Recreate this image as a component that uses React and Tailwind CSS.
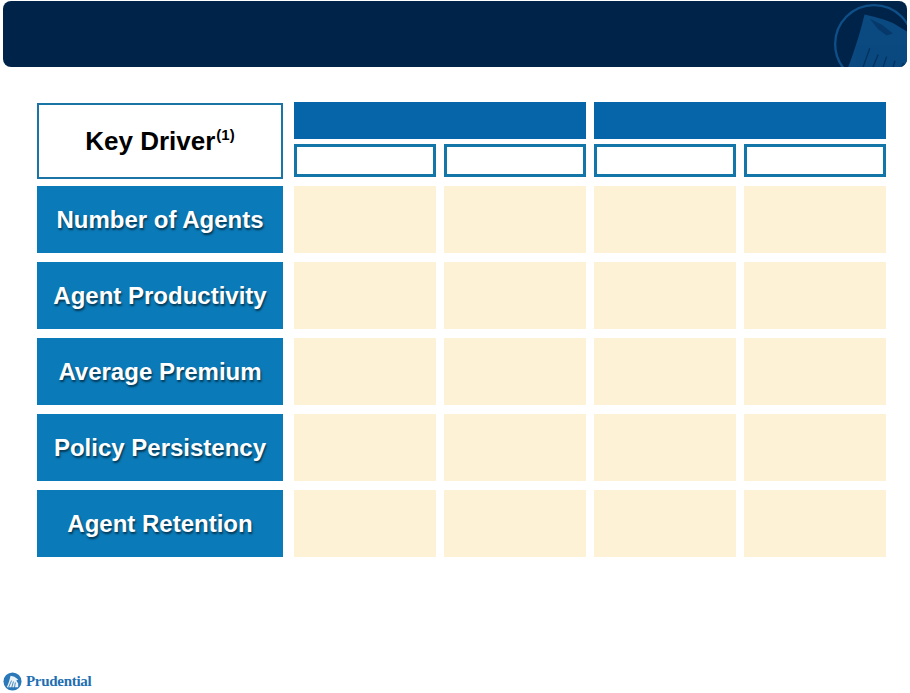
import React from 'react';

const drivers = [
  'Number of Agents',
  'Agent Productivity',
  'Average Premium',
  'Policy Persistency',
  'Agent Retention',
];

const cols = 'grid grid-cols-[249px_142px_142px_142px_142px] gap-x-2';

// Rock of Gibraltar mark in the title bar
const HeaderMark = () => (
  <svg viewBox="0 0 80 80" className="absolute left-[829px] top-[1px] w-[84px] h-[84px]">
    <circle cx="40" cy="40" r="37" fill="none" stroke="#0e4f87" strokeWidth="2.2" />
    <path
      d="M12 70 C18 56 24 40 31 12 L40 14 L50 17 L58 20 L68 26 L78 32 L80 40 L80 80 L10 80 Z"
      fill="#0a4a80"
    />
    <path d="M36 16 L48 22 L58 30 L52 32 L44 26 Z" fill="#06396a" />
    <path
      d="M26 72 L36 44 M34 74 L44 50 M44 76 L52 52 M54 76 L60 56 M62 74 L68 58 M70 70 L74 60"
      stroke="#00234a"
      strokeWidth="1.3"
      opacity="0.6"
    />
  </svg>
);

const FooterMark = () => (
  <svg viewBox="0 0 20 20" className="w-[19px] h-[19px]">
    <circle cx="10" cy="10" r="9.5" fill="#2a78b8" />
    <path d="M4 16 C6 12 7 8 8 4 L12 5 L16 8 L14 9 L16 12 L16 16 Z" fill="#fff" opacity="0.9" />
    <path d="M6 16 L9 9 M9 17 L11 10 M12 17 L13 11" stroke="#2a78b8" strokeWidth="0.9" />
  </svg>
);

const App = () => {
  return (
    <div className="w-[910px] h-[693px] bg-white relative font-['Liberation_Sans',Arial,sans-serif] overflow-hidden">
      {/* Title bar */}
      <div className="mx-[3px] mt-px h-[66px] rounded-lg bg-[#00234a] relative overflow-hidden">
        <HeaderMark />
      </div>

      {/* Table */}
      <div className="pl-[37px] pt-[35px]">
        {/* Header rows */}
        <div className={`${cols} grid-rows-[37px_33px] gap-y-[5px]`}>
          <div className="row-span-2 w-[246px] mt-px -mb-[2px] border-2 border-[#1a74a6] bg-white flex items-center justify-center">
            <span className="text-[26px] font-bold text-black">
              Key Driver<span className="text-[15px] relative -top-[10px] ml-px">(1)</span>
            </span>
          </div>
          <div className="col-span-2 bg-[#0665a9]" />
          <div className="col-span-2 bg-[#0665a9]" />
          <div className="border-[3px] border-[#1276a8] bg-white" />
          <div className="border-[3px] border-[#1276a8] bg-white" />
          <div className="border-[3px] border-[#1276a8] bg-white" />
          <div className="border-[3px] border-[#1276a8] bg-white" />
        </div>

        {/* Driver rows */}
        <div className="mt-[9px] flex flex-col gap-[9px]">
          {drivers.map((d) => (
            <div key={d} className={`${cols} h-[67px]`}>
              <div className="w-[246px] bg-[#0a7ab8] flex items-center justify-center">
                <span className="text-white font-bold text-[24px] [text-shadow:1px_2px_2px_rgba(0,0,0,0.55)]">
                  {d}
                </span>
              </div>
              <div className="bg-[#fdf1d6]" />
              <div className="bg-[#fdf1d6]" />
              <div className="bg-[#fdf1d6]" />
              <div className="bg-[#fdf1d6]" />
            </div>
          ))}
        </div>
      </div>

      {/* Footer logo */}
      <div className="absolute left-[3px] top-[670px] flex items-center gap-[4px]">
        <FooterMark />
        <span className="font-['Liberation_Serif',serif] font-bold text-[15px] text-[#1f6fb2] tracking-[-0.3px]">
          Prudential
        </span>
      </div>
    </div>
  );
};

export default App;
